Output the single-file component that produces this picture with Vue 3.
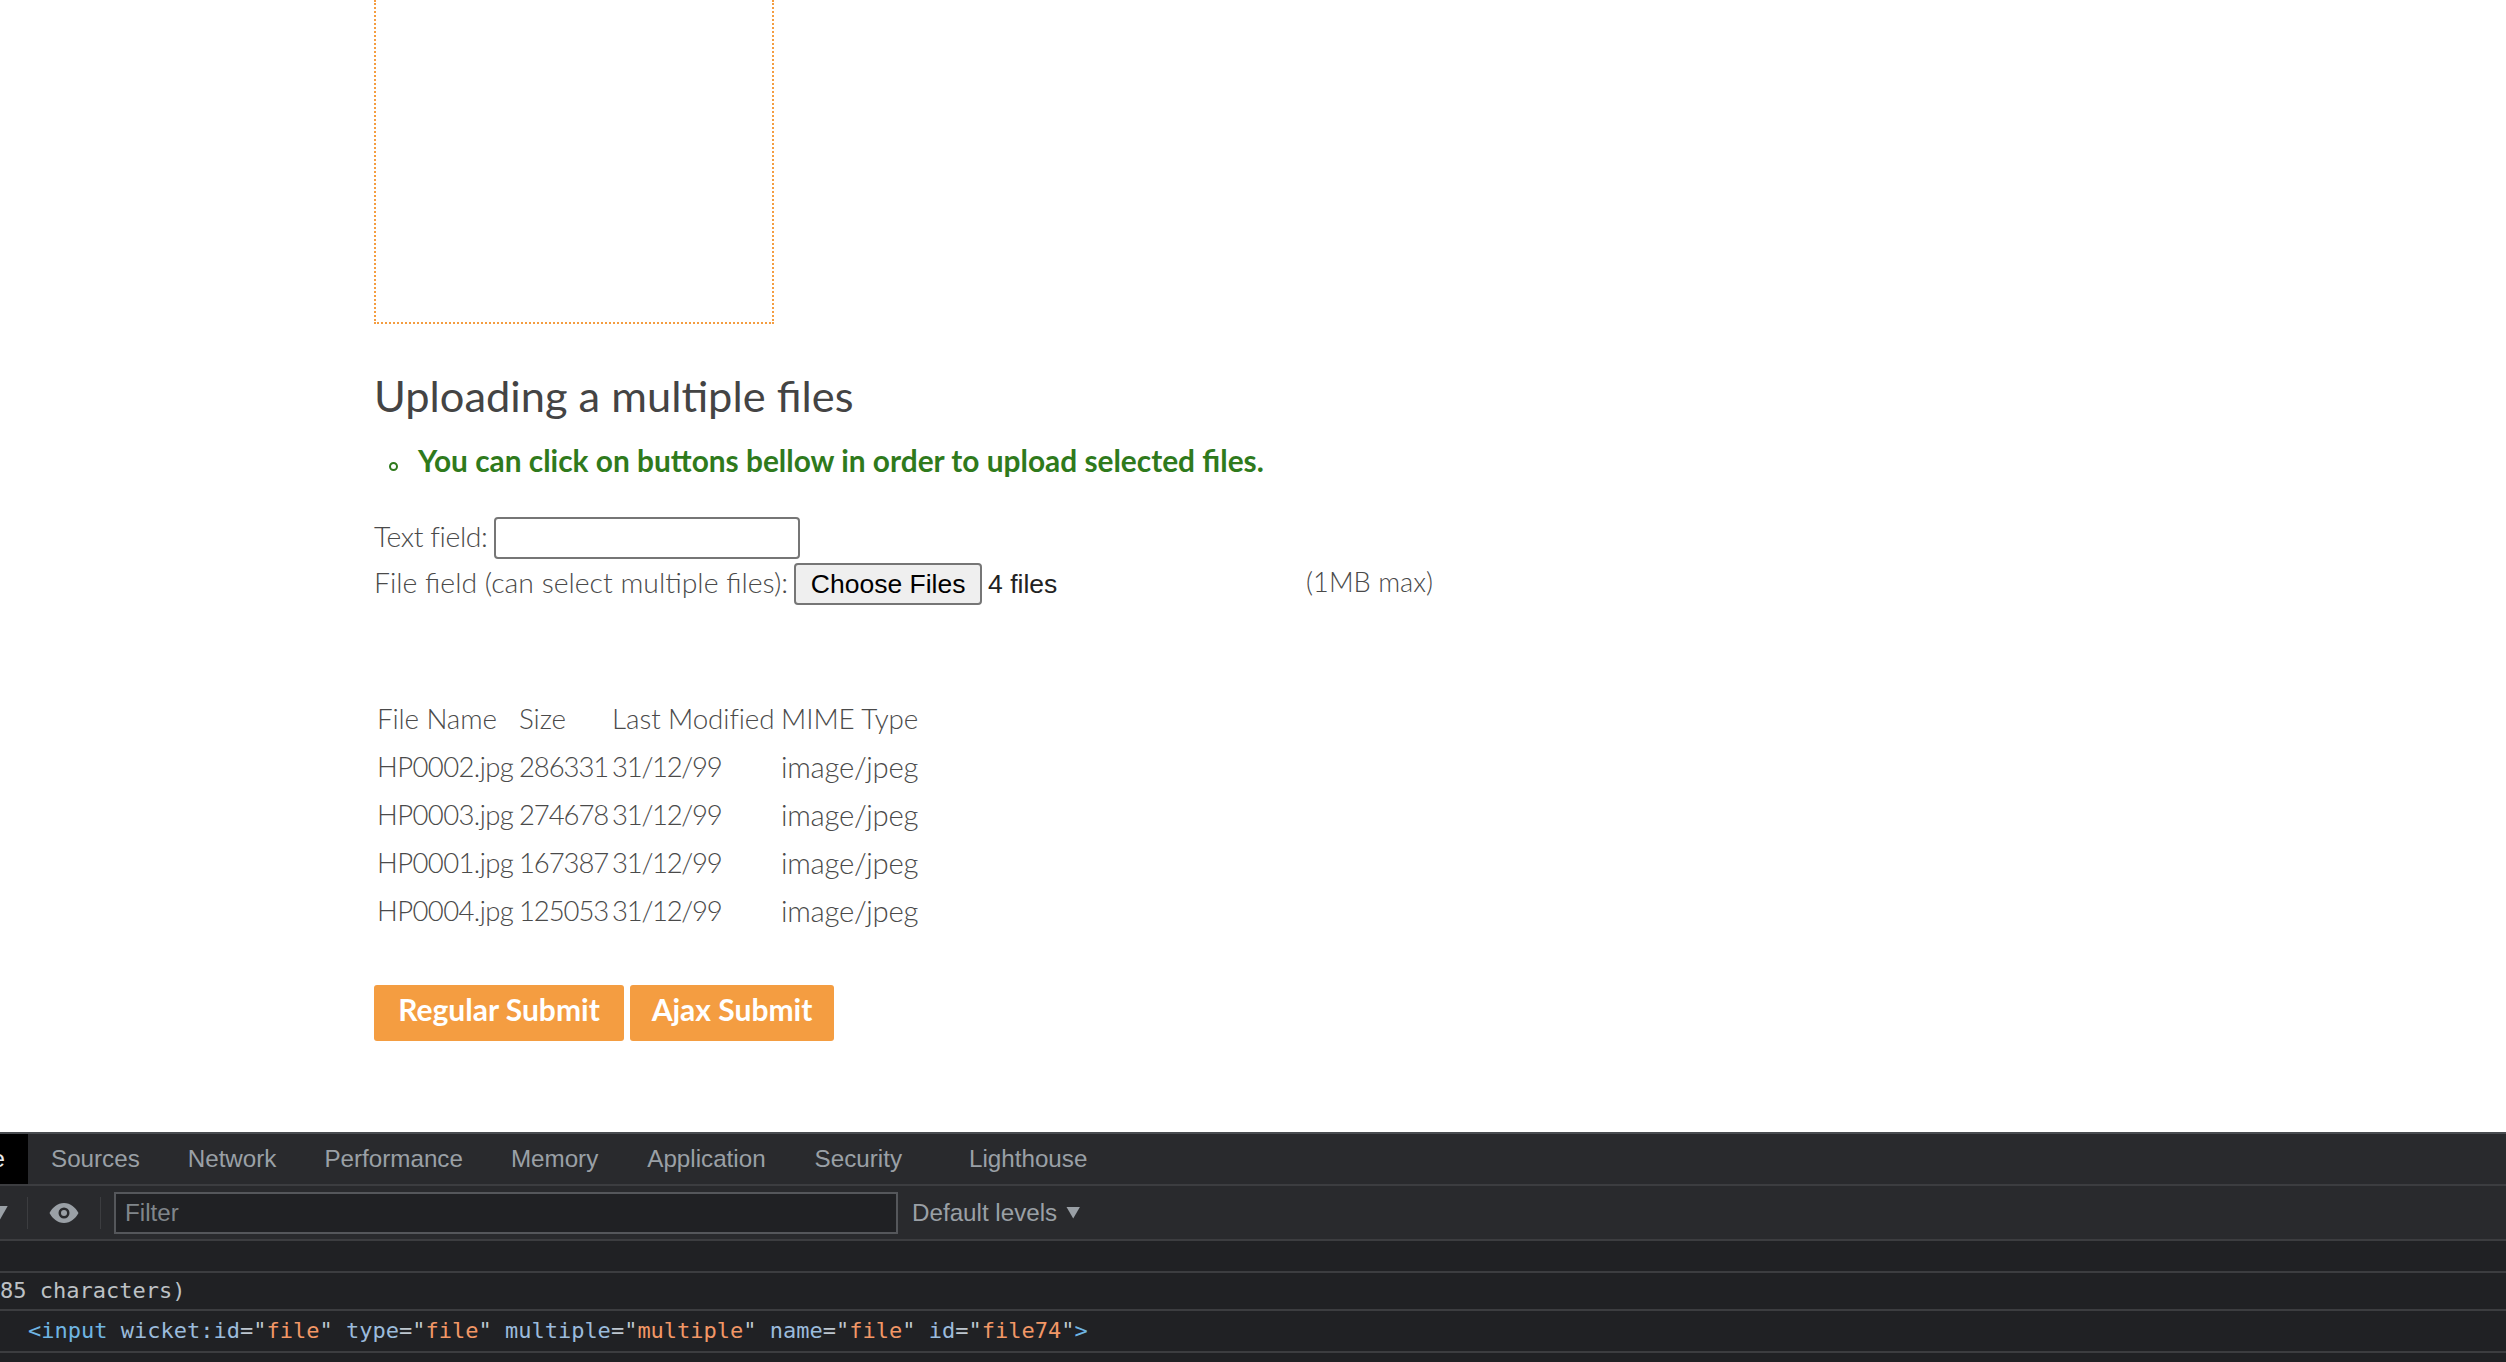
<script setup>
const rows = [
  ['HP0002.jpg', '286331', '31/12/99', 'image/jpeg'],
  ['HP0003.jpg', '274678', '31/12/99', 'image/jpeg'],
  ['HP0001.jpg', '167387', '31/12/99', 'image/jpeg'],
  ['HP0004.jpg', '125053', '31/12/99', 'image/jpeg'],
]
const tabs = ['Sources', 'Network', 'Performance', 'Memory', 'Application', 'Security', 'Lighthouse']
</script>

<template>
  <div class="page">
    <main class="main">
      <div class="drop"></div>
      <h2 class="title">Uploading a multiple files</h2>
      <ul class="msgs"><li>You can click on buttons bellow in order to upload selected files.</li></ul>
      <div class="row row1">
        <label>Text field:</label>
        <span class="textbox"></span>
      </div>
      <div class="row row2">
        <label>File field (can select multiple files):</label>
        <span class="choose">Choose Files</span>
        <span class="count">4 files</span>
        <span class="max">(1MB max)</span>
      </div>
      <table class="files">
        <thead>
          <tr><th>File Name</th><th>Size</th><th>Last Modified</th><th>MIME Type</th></tr>
        </thead>
        <tbody>
          <tr v-for="r in rows" :key="r[0]"><td v-for="c in r" :key="c">{{ c }}</td></tr>
        </tbody>
      </table>
      <div class="actions">
        <button class="btn b1">Regular Submit</button>
        <button class="btn b2">Ajax Submit</button>
      </div>
    </main>
    <section class="devtools">
      <div class="tabs">
        <span class="active"><span>e</span></span>
        <span v-for="t in tabs" :key="t" class="tab" :class="'t-' + t">{{ t }}</span>
      </div>
      <div class="toolbar">
        <span class="caret-cut"></span>
        <span class="sep s1"></span>
        <svg class="eye" width="30" height="22" viewBox="0 0 30 22">
          <path fill="#9aa0a6" fill-rule="evenodd" d="M15 1C8.500 1 3.500 5.500 0.500 11 3.500 16.500 8.500 21 15 21s11.500-4.500 14.500-10C26.500 5.500 21.500 1 15 1zm0 4.500a5.500 5.500 0 1 1 0 11 5.500 5.500 0 0 1 0-11z"/>
          <circle cx="15" cy="11" r="3" fill="#9aa0a6"/>
        </svg>
        <span class="sep s2"></span>
        <span class="filter">Filter</span>
        <span class="levels">Default levels</span>
        <span class="caret"></span>
      </div>
      <div class="line blank"></div>
      <div class="line msg">85 characters)</div>
      <div class="line code"><span class="tag">&lt;input</span> <span class="an">wicket:id</span><span class="eq">=</span><span class="q">"</span><span class="v">file</span><span class="q">"</span> <span class="an">type</span><span class="eq">=</span><span class="q">"</span><span class="v">file</span><span class="q">"</span> <span class="an">multiple</span><span class="eq">=</span><span class="q">"</span><span class="v">multiple</span><span class="q">"</span> <span class="an">name</span><span class="eq">=</span><span class="q">"</span><span class="v">file</span><span class="q">"</span> <span class="an">id</span><span class="eq">=</span><span class="q">"</span><span class="v">file74</span><span class="q">"</span><span class="tag">&gt;</span></div>
    </section>
  </div>
</template>

<style>
html, body { margin: 0; background: #fff; overflow: hidden; }
</style>

<style scoped>
.page { height: 1362px; display: flex; flex-direction: column; overflow: hidden; background: #fff; }
.main { flex: 1; min-height: 0; padding-left: 374px; font-family: "Lato", "Noto Sans", sans-serif; font-weight: 300; font-size: 28.400px; color: #4a4a4a; }
.drop { width: 396px; height: 322px; border: 2px dotted #f49d41; border-top: 0; }
.title { margin: 43px 0 0; font-size: 43.400px; line-height: 56px; font-weight: 400; color: #444; }
.msgs { margin: 18px 0 0; padding: 0 0 0 44px; list-style: none; color: #2f7a1c; font-weight: 700; font-size: 29.850px; line-height: 40px; }
.msgs li { position: relative; }
.msgs li::before { content: ""; position: absolute; left: -29px; top: 21px; width: 5px; height: 5px; border: 2.500px solid #2f7a1c; border-radius: 50%; }
.row { display: flex; align-items: center; }
.row label { padding-bottom: 5px; }
.row1 { margin-top: 36px; height: 42px; }
.row1 label { letter-spacing: -0.4px; }
.textbox { margin-left: 7px; width: 302px; height: 38px; border: 2px solid #767676; border-radius: 4px; background: #fff; }
.row2 { margin-top: 4px; height: 42px; }
.choose { margin-left: 6px; width: 184px; height: 38px; border: 2px solid #767676; border-radius: 4px; background: #efefef; color: #000; display: flex; align-items: center; justify-content: center; font: 400 26.500px "Liberation Sans", sans-serif; }
.count { margin-left: 6px; font: 400 26.500px "Liberation Sans", sans-serif; color: #222; width: 318px; }
.max { white-space: nowrap; font-size: 27.200px; padding-bottom: 5px; }
.files { margin-top: 87px; border-collapse: separate; border-spacing: 4px; margin-left: -1px; }
.files th, .files td { padding: 0; height: 44px; text-align: left; font-weight: 300; white-space: nowrap; }
.files th { font-size: 27.800px; letter-spacing: -0.1px; }
.files td { font-size: 27.500px; letter-spacing: -0.6px; }
.files th:nth-child(1) { width: 138px; }
.files th:nth-child(2) { width: 87px; }
.files th:nth-child(3) { width: 165px; }
.files td:nth-child(2) { letter-spacing: -1.1px; }
.files td:nth-child(3) { letter-spacing: -1.3px; }
.files td:nth-child(4) { font-size: 29.300px; letter-spacing: -0.3px; }
.actions { margin-top: 49px; display: flex; gap: 6px; }
.btn { height: 56px; padding: 0 0 8px; border: 0; border-radius: 3px; background: #f49d41; color: #fff; font: 700 30px "Lato", sans-serif; }
.b1 { width: 250px; }
.b2 { width: 204px; }
.devtools { height: 230px; flex: none; background: #202124; border-top: 2px solid #494c50; font-family: "Liberation Sans", sans-serif; color: #9aa0a6; box-sizing: border-box; }
.tabs { height: 52px; box-sizing: border-box; background: #292a2d; border-bottom: 2px solid #3c3d40; display: flex; align-items: center; font-size: 24.200px; }
.active { width: 28px; height: 50px; background: #000; color: #e8eaed; display: flex; align-items: center; justify-content: flex-end; overflow: hidden; }
.active span { margin-right: -1px; position: relative; left: -24px; }
.tab { color: #9aa0a6; margin-left: 48px; }
.t-Sources { margin-left: 23px; }
.t-Application, .t-Security { margin-left: 49px; }
.t-Lighthouse { margin-left: 67px; }
.toolbar { height: 55px; box-sizing: border-box; background: #292a2d; border-bottom: 2px solid #3c3d40; display: flex; align-items: center; font-size: 24.200px; }
.caret-cut { width: 8px; height: 14px; background: #9aa0a6; clip-path: polygon(0 0, 100% 0, 0 100%); }
.sep { width: 1px; height: 32px; background: #3c3d40; }
.s1 { margin-left: 19px; }
.eye { margin-left: 21px; }
.s2 { margin-left: 21px; }
.filter { margin-left: 13px; height: 38px; border: 2px solid #55575b; background: #202124; padding-left: 9px; width: 771px; line-height: 38px; color: #80868b; }
.levels { margin-left: 14px; }
.caret { margin-left: 9px; width: 14px; height: 12px; background: #9aa0a6; clip-path: polygon(0 0, 100% 0, 50% 100%); }
.line { border-bottom: 2px solid #3c3d40; box-sizing: border-box; font: 400 22px "DejaVu Sans Mono", "Liberation Mono", monospace; white-space: pre; }
.blank { height: 32px; }
.msg { height: 38px; line-height: 36px; color: #bdc1c6; }
.code { height: 42px; line-height: 40px; padding-left: 28px; color: #a8c7e8; }
.tag { color: #6fb5e3; }
.an { color: #9bbbdc; }
.eq { color: #bdc6cf; }
.q { color: #bdc6cf; }
.v { color: #f29766; }
</style>
